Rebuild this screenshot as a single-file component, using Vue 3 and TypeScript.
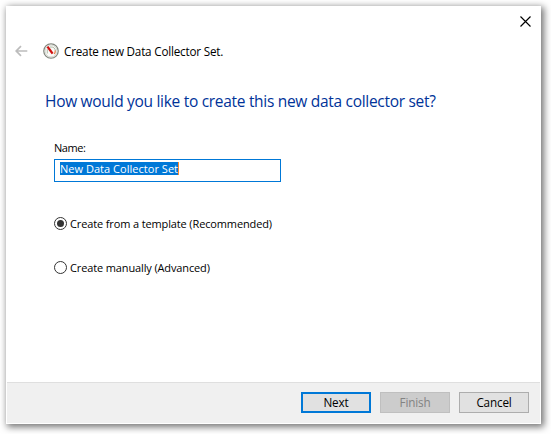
<script setup lang="ts">
import { ref } from 'vue'

const name = ref('New Data Collector Set')
const mode = ref<'template' | 'manual'>('template')
const options: { id: 'template' | 'manual'; label: string }[] = [
  { id: 'template', label: 'Create from a template (Recommended)' },
  { id: 'manual', label: 'Create manually (Advanced)' },
]
</script>

<template>
  <div class="stage">
    <section class="dialog">
      <div class="titlebar">
        <svg class="close" width="11" height="11" viewBox="0 0 11 11">
          <path d="M.5 .5L10.5 10.5M10.5 .5L.5 10.5" fill="none" stroke="#000" stroke-width="1.15" />
        </svg>
      </div>
      <header class="header">
        <svg class="back" width="13" height="12" viewBox="0 0 13 12">
          <path d="M12.3 6H1.3M6 1.2L1.2 6L6 10.8" fill="none" stroke="#bcbcbc" stroke-width="1.7" />
        </svg>
        <svg class="gauge" width="16" height="16" viewBox="0 0 16 16">
          <circle cx="8" cy="8" r="7.2" fill="#fafaf7" stroke="#83877f" stroke-width="1.3" />
          <circle cx="8" cy="8" r="6" fill="none" stroke="#d0d3cc" stroke-width=".9" />
          <path d="M4.3 10.5V6.2M7 4Q12.3 3.6 12.3 8" fill="none" stroke="#a9b5a0" stroke-width=".9" />
          <path d="M12.3 7.5Q12.3 9.5 11.3 11" fill="none" stroke="#e77a48" stroke-width="1.2" />
          <path d="M4.5 3.6L9.6 10.7" stroke="#cf1010" stroke-width="2.3" />
        </svg>
        <span class="caption">Create new Data Collector Set.</span>
      </header>
      <main class="body">
        <h1 class="heading">How would you like to create this new data collector set?</h1>
        <div class="form">
          <span class="label">Name:</span>
          <div class="field"><span class="selected">{{ name }}</span></div>
          <div v-for="o in options" :key="o.id" class="option" @click="mode = o.id">
            <span class="radio" :class="{ on: mode === o.id }"></span>
            <span class="option-text">{{ o.label }}</span>
          </div>
        </div>
      </main>
      <footer class="footer">
        <button class="btn primary">Next</button>
        <button class="btn" disabled>Finish</button>
        <button class="btn">Cancel</button>
      </footer>
    </section>
  </div>
</template>

<style>
body { background: #fff; overflow: hidden; }
</style>
<style scoped>
.stage { box-sizing: border-box; width: 551px; height: 434px; padding: 6px; background: #fff; overflow: hidden; font-family: "Open Sans", "Noto Sans", sans-serif; color: #000; }
.dialog { box-sizing: border-box; width: 535px; height: 418px; border: 1px solid #fff; background: #fff; display: flex; flex-direction: column; box-shadow: 2px 2px 7px 1px rgba(0, 0, 0, .55); }
.titlebar { height: 29px; display: flex; justify-content: flex-end; padding: 9px 9px 0 0; box-sizing: border-box; }
.close { display: block; }
.header { height: 30px; display: flex; align-items: center; padding-left: 8px; }
.back { margin-right: 15px; }
.gauge { margin-right: 5px; }
.caption { font-size: 11.7px; line-height: 16px; white-space: nowrap; letter-spacing: -.2px; }
.body { flex: 1; min-height: 0; }
.heading { margin: 23px 0 0 38px; font-size: 15.5px; line-height: 24px; font-weight: 400; color: #003399; white-space: nowrap; letter-spacing: -.3px; }
.form { display: flex; flex-direction: column; padding: 27px 0 0 47px; font-size: 11px; }
.label { line-height: 16px; height: 19px; letter-spacing: -.45px; }
.field { box-sizing: border-box; width: 227px; height: 23px; border: 1px solid #0078d7; padding: 2px 0 0 5px; margin-bottom: 33px; line-height: 13px; }
.selected { display: inline-block; height: 13px; vertical-align: top; background: #0078d7; color: #fff; border-right: 1px solid #ff8728; white-space: nowrap; letter-spacing: .03px; }
.option { display: flex; align-items: center; height: 17px; margin-bottom: 27px; }
.radio { box-sizing: border-box; width: 13px; height: 13px; border: 1px solid #333; border-radius: 50%; margin-right: 3px; display: flex; align-items: center; justify-content: center; }
.radio.on::after { content: ""; width: 7px; height: 7px; border-radius: 50%; background: #333; }
.option-text { white-space: nowrap; line-height: 17px; letter-spacing: -.13px; }
.footer { box-sizing: border-box; height: 41px; border-top: 1px solid #dfdfdf; background: #f0f0f0; display: flex; justify-content: flex-end; gap: 9px; padding: 9px 11px 0 0; }
.btn { box-sizing: border-box; width: 70px; height: 21px; padding: 0 0 1px; border: 1px solid #adadad; background: #e1e1e1; color: #000; font: 11.7px/17px "Open Sans", "Noto Sans", sans-serif; letter-spacing: -.15px; }
.btn.primary { border: 2px solid #0078d7; line-height: 15px; }
.btn:disabled { background: #ccc; border-color: #bfbfbf; color: #838383; }
</style>
